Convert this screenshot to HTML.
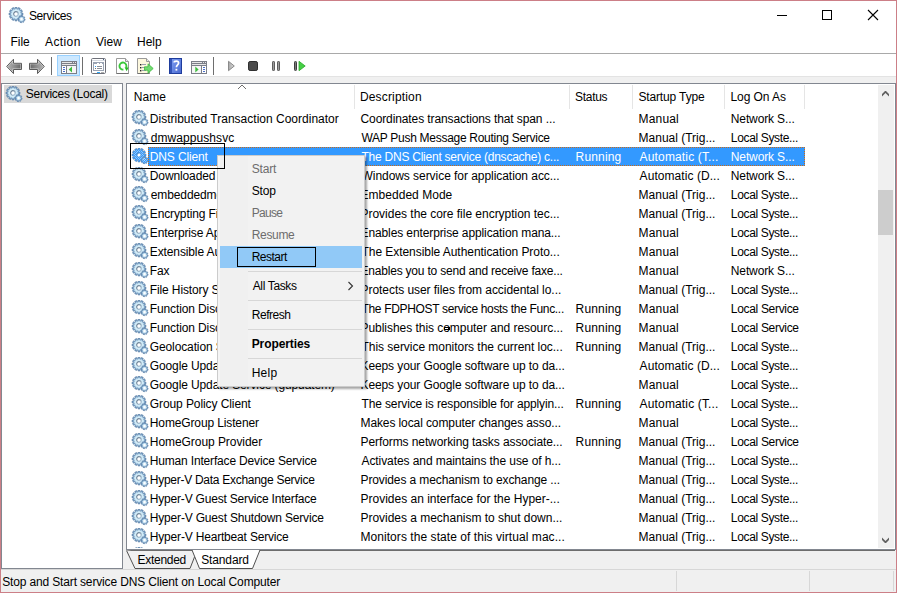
<!DOCTYPE html>
<html><head><meta charset="utf-8">
<style>
*{box-sizing:border-box;margin:0;padding:0}
html,body{width:897px;height:593px;overflow:hidden;background:#fff}
body{position:relative;font-family:"Liberation Sans",sans-serif;font-size:12px;color:#000}
.a{position:absolute}
.t{position:absolute;white-space:nowrap;line-height:14px}
#frame{position:absolute;left:0;top:0;width:897px;height:593px;border:1px solid #cc7f87;z-index:50;pointer-events:none}
/* menu bar */
#menuline{left:1px;top:53px;width:895px;height:1px;background:#a9a9a9}
#tb{left:1px;top:54px;width:895px;height:22px;background:#fff}
#tbline{left:1px;top:76px;width:895px;height:1px;background:#e3e3e3}
#band{left:1px;top:77px;width:895px;height:516px;background:#f0f0f0}
.sep{position:absolute;top:57px;width:1px;height:18px;background:#6e6e6e}
/* left pane */
#lp{left:1px;top:83px;width:122px;height:486px;border:1px solid #828790;background:#fff}
#lpsel{left:4px;top:85px;width:108px;height:18px;background:#d9d9d9}
/* right pane */
#rp{left:126px;top:83px;width:770px;height:467px;border:1px solid #828790;background:#fff;overflow:hidden}
.hs{position:absolute;top:85px;width:1px;height:24px;background:#e5e5e5}
.row{position:static}
.rt{position:absolute;line-height:14px;white-space:nowrap}
.gi{position:absolute}
.row.sel .rt{color:#fff}
#selbar{left:148px;top:147px;width:657px;height:19px;background:#3399ff;border:1px dotted #c96a18}
#focus{left:130px;top:143px;width:95px;height:26px;border:1px solid #000;z-index:30}
/* scrollbar */
#sb{left:878px;top:85px;width:16px;height:463px;background:#f0f0f0}
#thumb{left:878px;top:190px;width:15px;height:45px;background:#cdcdcd}
/* tabs */
#tabline1{left:127px;top:549px;width:768px;height:1px;background:#828790}
#tabline2{left:127px;top:550px;width:768px;height:1px;background:#6d6d6d}
/* status */
#stline{left:1px;top:569px;width:895px;height:1px;background:#d7d7d7}
.sdiv{position:absolute;top:571px;width:1px;height:20px;background:#d7d7d7}
/* context menu */
#cm{left:217px;top:155px;width:148px;height:232px;background:#f0f0f0;border:1px solid #cccccc;z-index:20;box-shadow:2px 2px 2px rgba(0,0,0,0.35)}
#cmgut{left:248px;top:156px;width:116px;height:230px;background:#f2f2f2;z-index:21}
.mi{position:absolute;left:252px;line-height:14px;white-space:nowrap;z-index:22}
.dis{color:#6d6d6d}
.msep{position:absolute;left:248px;width:114px;height:1px;background:#d7d7d7;z-index:22}
#mhi{left:220px;top:246px;width:142px;height:22px;background:#91c9f7;z-index:21}
#mfocus{left:237px;top:247px;width:79px;height:20px;border:1px solid #000;z-index:23}
</style></head>
<body>
<svg width="0" height="0" style="position:absolute">
<defs>
<radialGradient id="gg" gradientUnits="userSpaceOnUse" cx="8" cy="7" r="7.2">
<stop offset="0" stop-color="#ffffff"/><stop offset="0.4" stop-color="#def2fa"/><stop offset="0.62" stop-color="#c6e4f4"/><stop offset="0.82" stop-color="#8ab2d4"/><stop offset="1" stop-color="#5a85ae"/>
</radialGradient>
<linearGradient id="gr" gradientUnits="userSpaceOnUse" x1="5.5" y1="4.5" x2="10.5" y2="9.5"><stop offset="0" stop-color="#5a6d82"/><stop offset="1" stop-color="#b4d3e8"/></linearGradient>
<radialGradient id="gs" gradientUnits="userSpaceOnUse" cx="13.6" cy="12.2" r="3.6">
<stop offset="0" stop-color="#ffffff"/><stop offset="0.5" stop-color="#c4e2f4"/><stop offset="1" stop-color="#6795c0"/>
</radialGradient>
<filter id="self" x="0" y="0" width="1" height="1"><feFlood flood-color="#3399ff" flood-opacity="0.6"/><feComposite in2="SourceAlpha" operator="in"/><feComposite in2="SourceGraphic" operator="over"/></filter>
<g id="gear">
<path d="M13.22 6.08 L14.83 6.01 L14.83 7.99 L13.22 7.92 L12.98 8.81 L14.41 9.56 L13.42 11.27 L12.06 10.41 L11.41 11.06 L12.27 12.42 L10.56 13.41 L9.81 11.98 L8.92 12.22 L8.99 13.83 L7.01 13.83 L7.08 12.22 L6.19 11.98 L5.44 13.41 L3.73 12.42 L4.59 11.06 L3.94 10.41 L2.58 11.27 L1.59 9.56 L3.02 8.81 L2.78 7.92 L1.17 7.99 L1.17 6.01 L2.78 6.08 L3.02 5.19 L1.59 4.44 L2.58 2.73 L3.94 3.59 L4.59 2.94 L3.73 1.58 L5.44 0.59 L6.19 2.02 L7.08 1.78 L7.01 0.17 L8.99 0.17 L8.92 1.78 L9.81 2.02 L10.56 0.59 L12.27 1.58 L11.41 2.94 L12.06 3.59 L13.42 2.73 L14.41 4.44 L12.98 5.19Z" fill="url(#gg)" stroke="#5a80a8" stroke-width="0.8" stroke-linejoin="miter"/>
<circle cx="8" cy="7" r="2.3" fill="#fff" stroke="url(#gr)" stroke-width="1.2"/>
<path d="M16.00 11.99 L17.10 12.11 L16.82 13.49 L15.76 13.17 L15.34 13.79 L16.04 14.65 L14.87 15.43 L14.34 14.46 L13.61 14.60 L13.49 15.70 L12.11 15.42 L12.43 14.36 L11.81 13.94 L10.95 14.64 L10.17 13.47 L11.14 12.94 L11.00 12.21 L9.90 12.09 L10.18 10.71 L11.24 11.03 L11.66 10.41 L10.96 9.55 L12.13 8.77 L12.66 9.74 L13.39 9.60 L13.51 8.50 L14.89 8.78 L14.57 9.84 L15.19 10.26 L16.05 9.56 L16.83 10.73 L15.86 11.26Z" fill="url(#gs)" stroke="#5a80a8" stroke-width="0.7" stroke-linejoin="miter"/>
<circle cx="13.5" cy="12.1" r="1.0" fill="#fff"/>
</g>
<pattern id="dith" patternUnits="userSpaceOnUse" width="2" height="2"><rect x="0" y="0" width="1" height="1" fill="#3399ff"/><rect x="1" y="1" width="1" height="1" fill="#3399ff"/></pattern>
<g id="gearsel"><use href="#gear"/><path d="M13.22 6.08 L14.83 6.01 L14.83 7.99 L13.22 7.92 L12.98 8.81 L14.41 9.56 L13.42 11.27 L12.06 10.41 L11.41 11.06 L12.27 12.42 L10.56 13.41 L9.81 11.98 L8.92 12.22 L8.99 13.83 L7.01 13.83 L7.08 12.22 L6.19 11.98 L5.44 13.41 L3.73 12.42 L4.59 11.06 L3.94 10.41 L2.58 11.27 L1.59 9.56 L3.02 8.81 L2.78 7.92 L1.17 7.99 L1.17 6.01 L2.78 6.08 L3.02 5.19 L1.59 4.44 L2.58 2.73 L3.94 3.59 L4.59 2.94 L3.73 1.58 L5.44 0.59 L6.19 2.02 L7.08 1.78 L7.01 0.17 L8.99 0.17 L8.92 1.78 L9.81 2.02 L10.56 0.59 L12.27 1.58 L11.41 2.94 L12.06 3.59 L13.42 2.73 L14.41 4.44 L12.98 5.19Z M8 5.3A1.7 1.7 0 1 0 8 8.7A1.7 1.7 0 1 0 8 5.3Z M16.00 11.99 L17.10 12.11 L16.82 13.49 L15.76 13.17 L15.34 13.79 L16.04 14.65 L14.87 15.43 L14.34 14.46 L13.61 14.60 L13.49 15.70 L12.11 15.42 L12.43 14.36 L11.81 13.94 L10.95 14.64 L10.17 13.47 L11.14 12.94 L11.00 12.21 L9.90 12.09 L10.18 10.71 L11.24 11.03 L11.66 10.41 L10.96 9.55 L12.13 8.77 L12.66 9.74 L13.39 9.60 L13.51 8.50 L14.89 8.78 L14.57 9.84 L15.19 10.26 L16.05 9.56 L16.83 10.73 L15.86 11.26Z" fill="url(#dith)" fill-rule="evenodd"/><path d="M13.22 6.08 L14.83 6.01 L14.83 7.99 L13.22 7.92 L12.98 8.81 L14.41 9.56 L13.42 11.27 L12.06 10.41 L11.41 11.06 L12.27 12.42 L10.56 13.41 L9.81 11.98 L8.92 12.22 L8.99 13.83 L7.01 13.83 L7.08 12.22 L6.19 11.98 L5.44 13.41 L3.73 12.42 L4.59 11.06 L3.94 10.41 L2.58 11.27 L1.59 9.56 L3.02 8.81 L2.78 7.92 L1.17 7.99 L1.17 6.01 L2.78 6.08 L3.02 5.19 L1.59 4.44 L2.58 2.73 L3.94 3.59 L4.59 2.94 L3.73 1.58 L5.44 0.59 L6.19 2.02 L7.08 1.78 L7.01 0.17 L8.99 0.17 L8.92 1.78 L9.81 2.02 L10.56 0.59 L12.27 1.58 L11.41 2.94 L12.06 3.59 L13.42 2.73 L14.41 4.44 L12.98 5.19Z M8 5.3A1.7 1.7 0 1 0 8 8.7A1.7 1.7 0 1 0 8 5.3Z M16.00 11.99 L17.10 12.11 L16.82 13.49 L15.76 13.17 L15.34 13.79 L16.04 14.65 L14.87 15.43 L14.34 14.46 L13.61 14.60 L13.49 15.70 L12.11 15.42 L12.43 14.36 L11.81 13.94 L10.95 14.64 L10.17 13.47 L11.14 12.94 L11.00 12.21 L9.90 12.09 L10.18 10.71 L11.24 11.03 L11.66 10.41 L10.96 9.55 L12.13 8.77 L12.66 9.74 L13.39 9.60 L13.51 8.50 L14.89 8.78 L14.57 9.84 L15.19 10.26 L16.05 9.56 L16.83 10.73 L15.86 11.26Z" fill="#3399ff" fill-opacity="0.35" fill-rule="evenodd"/></g>
</defs>
</svg>

<div id="frame"></div>

<!-- title bar -->
<svg class="a" style="left:8px;top:7px" width="18" height="18" viewBox="0 0 18 18"><use href="#gear"/></svg>
<div class="t" style="left:29.00px;top:9px;letter-spacing:-0.429px">Services</div>
<div class="a" style="left:777px;top:15px;width:10px;height:1px;background:#000"></div>
<div class="a" style="left:822px;top:10px;width:10px;height:10px;border:1px solid #000"></div>
<svg class="a" style="left:867px;top:9px" width="12" height="12" viewBox="0 0 12 12"><path d="M1 1L11 11M11 1L1 11" stroke="#000" stroke-width="1.1"/></svg>

<!-- menu -->
<div class="t" style="left:10.60px;top:35px;letter-spacing:-0.100px">File</div>
<div class="t" style="left:45.00px;top:35px;letter-spacing:0.400px">Action</div>
<div class="t" style="left:96px;top:35px">View</div>
<div class="t" style="left:137px;top:35px">Help</div>
<div class="a" id="menuline"></div>
<div class="a" id="tb"></div>
<div class="a" id="tbline"></div>
<div class="a" id="band"></div>

<!-- toolbar icons -->
<svg class="a" style="left:5px;top:58px" width="18" height="17" viewBox="0 0 18 17"><defs><linearGradient id="ag" x1="0" y1="0" x2="1" y2="0"><stop offset="0" stop-color="#b4b4b4"/><stop offset="1" stop-color="#6c6c6c"/></linearGradient><linearGradient id="ag2" x1="1" y1="0" x2="0" y2="0"><stop offset="0" stop-color="#b4b4b4"/><stop offset="1" stop-color="#6c6c6c"/></linearGradient></defs><path d="M1.7 8.4L8.5 1.2V5.3H16.5V11.5H8.5V15.6z" fill="#d6d6d6" stroke="#5c5c5c" stroke-width="1" stroke-linejoin="miter"/><path d="M2.5 8.4L7.5 3.4V6.3H15.5V10.5H7.5V13.4z" fill="url(#ag)"/></svg>
<svg class="a" style="left:28px;top:58px" width="18" height="17" viewBox="0 0 18 17"><path d="M16.3 8.4L9.5 1.2V5.3H1.5V11.5H9.5V15.6z" fill="#d6d6d6" stroke="#5c5c5c" stroke-width="1" stroke-linejoin="miter"/><path d="M15.5 8.4L10.5 3.4V6.3H2.5V10.5H10.5V13.4z" fill="url(#ag2)"/></svg>
<div class="sep" style="left:51px"></div>
<div class="a" style="left:57px;top:55px;width:23px;height:21px;background:#cce8ff;border:1px solid #99d1ff"></div>
<svg class="a" style="left:61px;top:61px" width="16" height="13" viewBox="0 0 16 13" shape-rendering="crispEdges"><rect x="0" y="0" width="16" height="13" fill="#7b7e87"/><rect x="1" y="1" width="10" height="1" fill="#e6e6e6"/><rect x="12" y="1" width="1" height="1" fill="#e6e6e6"/><rect x="14" y="1" width="1" height="1" fill="#e6e6e6"/><rect x="1" y="3" width="14" height="1" fill="#e6e6e6"/><rect x="1" y="5" width="4" height="7" fill="#fff"/><rect x="6" y="5" width="9" height="7" fill="#f6f6f6"/><rect x="2" y="6" width="2" height="1" fill="#4a6fc9"/><rect x="2" y="8" width="2" height="1" fill="#4a6fc9"/><rect x="2" y="10" width="2" height="1" fill="#4a6fc9"/><path d="M7.7 8.5L11 5.6V11.4z" fill="#3cbd3c" shape-rendering="auto"/></svg>
<div class="sep" style="left:82px"></div>
<svg class="a" style="left:91px;top:58px" width="15" height="16" viewBox="0 0 15 16"><rect x="0.5" y="0.5" width="14" height="15" rx="1.2" fill="#fff" stroke="#6e7079"/><rect x="1" y="2" width="13" height="1" fill="#d6dae2"/><rect x="12" y="1" width="1" height="1" fill="#4a5f80"/><rect x="2.5" y="4.5" width="10" height="8" fill="#fff" stroke="#9aa3b3"/><rect x="3" y="5" width="9" height="1" fill="#9aa3b3"/><rect x="6" y="5" width="2" height="1" fill="#fff"/><rect x="9" y="5" width="2" height="1" fill="#fff"/><rect x="4" y="8" width="1" height="1" fill="#2a9af0"/><rect x="6" y="8" width="5" height="1" fill="#8a8f99"/><rect x="4" y="10" width="1" height="1" fill="#777"/><rect x="6" y="10" width="5" height="1" fill="#8a8f99"/><rect x="6" y="14" width="3" height="1" fill="#30a8f8"/><rect x="10" y="14" width="3" height="1" fill="#b0b0b0"/></svg>
<svg class="a" style="left:116px;top:58px" width="13" height="16" viewBox="0 0 13 16"><path d="M0.5 0.5h9l3 3v12h-12z" fill="#fff" stroke="#9a9a9a"/><path d="M0.5 15.5h12" stroke="#707070"/><path d="M9.5 0.5v3h3" fill="#e8e8e8" stroke="#9a9a9a"/><path d="M7.4 11.55A3.5 3.5 0 1 1 10.1 9.6" fill="none" stroke="#3cc83c" stroke-width="1.9"/><path d="M8.6 9.2L12.6 9.6L10.6 13.2z" fill="#22b822"/></svg>
<svg class="a" style="left:137px;top:58px" width="17" height="16" viewBox="0 0 17 16"><path d="M0.5 0.5h9l3 3v12h-12z" fill="#fdf8de" stroke="#9a9a9a"/><path d="M0.5 15.5h12" stroke="#707070"/><path d="M9.5 0.5v3h3" fill="#e8e8e8" stroke="#9a9a9a"/><rect x="3" y="6" width="1.4" height="1.4" fill="#222"/><rect x="5" y="6" width="4" height="1" fill="#9aa0ae"/><rect x="3" y="9" width="1.4" height="1.4" fill="#222"/><rect x="5" y="9" width="4" height="1" fill="#9aa0ae"/><rect x="3" y="12" width="1.4" height="1.4" fill="#222"/><rect x="5" y="12" width="4" height="1" fill="#9aa0ae"/><path d="M7.5 8.8H11V5.8L16.2 10.5 11 15.2V12.2H7.5z" fill="#72da72" stroke="#3cba3c" stroke-width="0.8" stroke-linejoin="round"/></svg>
<div class="sep" style="left:159px"></div>
<svg class="a" style="left:169px;top:58px" width="13" height="16" viewBox="0 0 13 16"><defs><linearGradient id="hg" x1="0" y1="0" x2="1" y2="1"><stop offset="0" stop-color="#7b9bf0"/><stop offset="1" stop-color="#4a6ad0"/></linearGradient></defs><rect x="0" y="0" width="13" height="16" fill="#1e3c9c"/><rect x="1" y="1" width="2" height="14" fill="#3454b8"/><rect x="3" y="1" width="9" height="14" fill="url(#hg)"/><path d="M5.2 4.6C5.2 2.6 9.6 2.3 9.6 4.9C9.6 6.8 7.4 6.9 7.4 9.2" fill="none" stroke="#fff" stroke-width="1.7"/><rect x="6.5" y="10.8" width="1.8" height="1.8" fill="#fff"/></svg>
<svg class="a" style="left:191px;top:61px" width="16" height="13" viewBox="0 0 16 13" shape-rendering="crispEdges"><rect x="0" y="0" width="16" height="13" fill="#7b7e87"/><rect x="1" y="1" width="10" height="1" fill="#e6e6e6"/><rect x="12" y="1" width="1" height="1" fill="#e6e6e6"/><rect x="14" y="1" width="1" height="1" fill="#e6e6e6"/><rect x="1" y="3" width="14" height="1" fill="#e6e6e6"/><rect x="1" y="5" width="9" height="7" fill="#f6f6f6"/><rect x="11" y="5" width="4" height="7" fill="#fff"/><rect x="12" y="6" width="2" height="1" fill="#4a6fc9"/><rect x="12" y="8" width="2" height="1" fill="#4a6fc9"/><rect x="12" y="10" width="2" height="1" fill="#4a6fc9"/><path d="M4.3 5.6L7.6 8.5L4.3 11.4z" fill="#3cbd3c" shape-rendering="auto"/></svg>
<div class="sep" style="left:213px"></div>
<svg class="a" style="left:227px;top:60px" width="9" height="12" viewBox="0 0 9 12"><defs><linearGradient id="pg" x1="0" y1="0" x2="1" y2="0"><stop offset="0" stop-color="#a8a8a8"/><stop offset="1" stop-color="#dcdcdc"/></linearGradient></defs><path d="M1.5 1.3V10.7L7.3 6z" fill="url(#pg)" stroke="#8a8a8a" stroke-width="1" stroke-linejoin="round"/></svg>
<svg class="a" style="left:248px;top:61px" width="10" height="10" viewBox="0 0 10 10"><rect x="0.5" y="0.5" width="9" height="9" rx="1.6" fill="#4c4c4c" stroke="#2e2e2e"/></svg>
<svg class="a" style="left:272px;top:61px" width="9" height="10" viewBox="0 0 9 10"><rect x="0.5" y="0.5" width="2" height="9" rx="0.6" fill="#9c9c9c" stroke="#5e5e5e"/><rect x="5.5" y="0.5" width="2" height="9" rx="0.6" fill="#9c9c9c" stroke="#5e5e5e"/></svg>
<svg class="a" style="left:294px;top:61px" width="12" height="10" viewBox="0 0 12 10"><rect x="0.5" y="0.5" width="2" height="9" rx="0.8" fill="#7a7a7a" stroke="#3e3e3e"/><path d="M5 0.3V9.7L11.2 5z" fill="#46d046" stroke="#2aa82a" stroke-width="0.8" stroke-linejoin="round"/></svg>

<!-- left pane -->
<div class="a" id="lp"></div>
<div class="a" id="lpsel"></div>
<svg class="a" style="left:5px;top:86px" width="18" height="18" viewBox="0 0 18 18"><use href="#gear"/></svg>
<div class="t" style="left:25.80px;top:87px;letter-spacing:-0.253px">Services (Local)</div>

<!-- right pane -->
<div class="a" id="rp"></div>
<div class="t" style="left:133.80px;top:90px;letter-spacing:0.033px">Name</div>
<div class="t" style="left:359.90px;top:90px;letter-spacing:0.170px">Description</div>
<div class="t" style="left:575.10px;top:90px;letter-spacing:-0.300px">Status</div>
<div class="t" style="left:638.40px;top:90px;letter-spacing:-0.136px">Startup Type</div>
<div class="t" style="left:730.40px;top:90px;letter-spacing:-0.050px">Log On As</div>
<div class="hs" style="left:354px"></div>
<div class="hs" style="left:569px"></div>
<div class="hs" style="left:632px"></div>
<div class="hs" style="left:724px"></div>
<div class="hs" style="left:804px"></div>
<svg class="a" style="left:237px;top:84px" width="10" height="6" viewBox="0 0 10 6"><path d="M1 5L5 1L9 5" fill="none" stroke="#6e6e6e" stroke-width="1"/></svg>

<div class="a" id="selbar"></div>
<div class="a" style="left:127px;top:109px;width:751px;height:439px;overflow:hidden;z-index:2">
<div style="position:absolute;left:-127px;top:-109px;width:897px;height:593px">
<div class="row"><svg class="gi" style="left:131px;top:110px" width="18" height="18" viewBox="0 0 18 18"><use href="#gear"/></svg><div class="rt" style="left:149.80px;top:112px;letter-spacing:0.006px">Distributed Transaction Coordinator</div><div class="rt" style="left:360.50px;top:112px;letter-spacing:-0.103px">Coordinates transactions that span ...</div><div class="rt" style="left:638.60px;top:112px;letter-spacing:0.160px">Manual</div><div class="rt" style="left:730.80px;top:112px;letter-spacing:-0.127px">Network S...</div></div>
<div class="row"><svg class="gi" style="left:131px;top:129px" width="18" height="18" viewBox="0 0 18 18"><use href="#gear"/></svg><div class="rt" style="left:150.80px;top:131px;letter-spacing:0.064px">dmwappushsvc</div><div class="rt" style="left:361.50px;top:131px;letter-spacing:-0.287px">WAP Push Message Routing Service</div><div class="rt" style="left:638.60px;top:131px;letter-spacing:-0.007px">Manual (Trig...</div><div class="rt" style="left:730.80px;top:131px;letter-spacing:-0.338px">Local Syste...</div></div>
<div class="row sel"><svg class="gi" style="left:131px;top:148px" width="18" height="18" viewBox="0 0 18 18"><use href="#gearsel"/></svg><div class="rt" style="left:149.80px;top:150px;letter-spacing:-0.144px">DNS Client</div><div class="rt" style="left:361.50px;top:150px;letter-spacing:-0.241px">The DNS Client service (dnscache) c...</div><div class="rt" style="left:575.60px;top:150px;letter-spacing:0.150px">Running</div><div class="rt" style="left:639.60px;top:150px;letter-spacing:0.150px">Automatic (T...</div><div class="rt" style="left:730.80px;top:150px;letter-spacing:-0.127px">Network S...</div></div>
<div class="row"><svg class="gi" style="left:131px;top:167px" width="18" height="18" viewBox="0 0 18 18"><use href="#gear"/></svg><div class="rt" style="left:149.80px;top:169px;letter-spacing:-0.120px">Downloaded Maps Manager</div><div class="rt" style="left:361.50px;top:169px;letter-spacing:-0.051px">Windows service for application acc...</div><div class="rt" style="left:639.60px;top:169px;letter-spacing:0.064px">Automatic (D...</div><div class="rt" style="left:730.80px;top:169px;letter-spacing:-0.127px">Network S...</div></div>
<div class="row"><svg class="gi" style="left:131px;top:186px" width="18" height="18" viewBox="0 0 18 18"><use href="#gear"/></svg><div class="rt" style="left:150.80px;top:188px;letter-spacing:-0.120px">embeddedmode</div><div class="rt" style="left:360.50px;top:188px;letter-spacing:0.033px">Embedded Mode</div><div class="rt" style="left:638.60px;top:188px;letter-spacing:-0.007px">Manual (Trig...</div><div class="rt" style="left:730.80px;top:188px;letter-spacing:-0.338px">Local Syste...</div></div>
<div class="row"><svg class="gi" style="left:131px;top:205px" width="18" height="18" viewBox="0 0 18 18"><use href="#gear"/></svg><div class="rt" style="left:149.80px;top:207px;letter-spacing:-0.120px">Encrypting File System (EFS)</div><div class="rt" style="left:360.50px;top:207px;letter-spacing:-0.023px">Provides the core file encryption tec...</div><div class="rt" style="left:638.60px;top:207px;letter-spacing:-0.007px">Manual (Trig...</div><div class="rt" style="left:730.80px;top:207px;letter-spacing:-0.338px">Local Syste...</div></div>
<div class="row"><svg class="gi" style="left:131px;top:224px" width="18" height="18" viewBox="0 0 18 18"><use href="#gear"/></svg><div class="rt" style="left:149.80px;top:226px;letter-spacing:-0.120px">Enterprise App Management Service</div><div class="rt" style="left:360.50px;top:226px;letter-spacing:-0.108px">Enables enterprise application mana...</div><div class="rt" style="left:638.60px;top:226px;letter-spacing:0.160px">Manual</div><div class="rt" style="left:730.80px;top:226px;letter-spacing:-0.338px">Local Syste...</div></div>
<div class="row"><svg class="gi" style="left:131px;top:243px" width="18" height="18" viewBox="0 0 18 18"><use href="#gear"/></svg><div class="rt" style="left:149.80px;top:245px;letter-spacing:-0.120px">Extensible Authentication Protocol</div><div class="rt" style="left:361.50px;top:245px;letter-spacing:-0.051px">The Extensible Authentication Proto...</div><div class="rt" style="left:638.60px;top:245px;letter-spacing:0.160px">Manual</div><div class="rt" style="left:730.80px;top:245px;letter-spacing:-0.338px">Local Syste...</div></div>
<div class="row"><svg class="gi" style="left:131px;top:262px" width="18" height="18" viewBox="0 0 18 18"><use href="#gear"/></svg><div class="rt" style="left:149.80px;top:264px;letter-spacing:-0.120px">Fax</div><div class="rt" style="left:360.50px;top:264px;letter-spacing:-0.203px">Enables you to send and receive faxe...</div><div class="rt" style="left:638.60px;top:264px;letter-spacing:0.160px">Manual</div><div class="rt" style="left:730.80px;top:264px;letter-spacing:-0.127px">Network S...</div></div>
<div class="row"><svg class="gi" style="left:131px;top:281px" width="18" height="18" viewBox="0 0 18 18"><use href="#gear"/></svg><div class="rt" style="left:149.80px;top:283px;letter-spacing:-0.120px">File History Service</div><div class="rt" style="left:360.50px;top:283px;letter-spacing:-0.050px">Protects user files from accidental lo...</div><div class="rt" style="left:638.60px;top:283px;letter-spacing:-0.007px">Manual (Trig...</div><div class="rt" style="left:730.80px;top:283px;letter-spacing:-0.338px">Local Syste...</div></div>
<div class="row"><svg class="gi" style="left:131px;top:300px" width="18" height="18" viewBox="0 0 18 18"><use href="#gear"/></svg><div class="rt" style="left:149.80px;top:302px;letter-spacing:-0.120px">Function Discovery Provider Host</div><div class="rt" style="left:361.50px;top:302px;letter-spacing:-0.328px">The FDPHOST service hosts the Func...</div><div class="rt" style="left:575.60px;top:302px;letter-spacing:0.150px">Running</div><div class="rt" style="left:638.60px;top:302px;letter-spacing:0.160px">Manual</div><div class="rt" style="left:730.80px;top:302px;letter-spacing:-0.317px">Local Service</div></div>
<div class="row"><svg class="gi" style="left:131px;top:319px" width="18" height="18" viewBox="0 0 18 18"><use href="#gear"/></svg><div class="rt" style="left:149.80px;top:321px;letter-spacing:-0.120px">Function Discovery Resource Publication</div><div class="rt" style="left:360.50px;top:321px;letter-spacing:-0.041px">Publishes this computer and resourc...</div><div class="rt" style="left:575.60px;top:321px;letter-spacing:0.150px">Running</div><div class="rt" style="left:638.60px;top:321px;letter-spacing:0.160px">Manual</div><div class="rt" style="left:730.80px;top:321px;letter-spacing:-0.317px">Local Service</div></div>
<div class="row"><svg class="gi" style="left:131px;top:338px" width="18" height="18" viewBox="0 0 18 18"><use href="#gear"/></svg><div class="rt" style="left:149.80px;top:340px;letter-spacing:-0.120px">Geolocation Service</div><div class="rt" style="left:361.50px;top:340px;letter-spacing:-0.038px">This service monitors the current loc...</div><div class="rt" style="left:575.60px;top:340px;letter-spacing:0.150px">Running</div><div class="rt" style="left:638.60px;top:340px;letter-spacing:-0.007px">Manual (Trig...</div><div class="rt" style="left:730.80px;top:340px;letter-spacing:-0.338px">Local Syste...</div></div>
<div class="row"><svg class="gi" style="left:131px;top:357px" width="18" height="18" viewBox="0 0 18 18"><use href="#gear"/></svg><div class="rt" style="left:149.80px;top:359px;letter-spacing:-0.120px">Google Update Service (gupdate)</div><div class="rt" style="left:360.50px;top:359px;letter-spacing:-0.103px">Keeps your Google software up to da...</div><div class="rt" style="left:639.60px;top:359px;letter-spacing:0.064px">Automatic (D...</div><div class="rt" style="left:730.80px;top:359px;letter-spacing:-0.338px">Local Syste...</div></div>
<div class="row"><svg class="gi" style="left:131px;top:376px" width="18" height="18" viewBox="0 0 18 18"><use href="#gear"/></svg><div class="rt" style="left:149.80px;top:378px;letter-spacing:-0.120px">Google Update Service (gupdatem)</div><div class="rt" style="left:360.50px;top:378px;letter-spacing:-0.103px">Keeps your Google software up to da...</div><div class="rt" style="left:638.60px;top:378px;letter-spacing:0.160px">Manual</div><div class="rt" style="left:730.80px;top:378px;letter-spacing:-0.338px">Local Syste...</div></div>
<div class="row"><svg class="gi" style="left:131px;top:395px" width="18" height="18" viewBox="0 0 18 18"><use href="#gear"/></svg><div class="rt" style="left:149.80px;top:397px;letter-spacing:-0.089px">Group Policy Client</div><div class="rt" style="left:361.50px;top:397px;letter-spacing:-0.128px">The service is responsible for applyin...</div><div class="rt" style="left:575.60px;top:397px;letter-spacing:0.150px">Running</div><div class="rt" style="left:639.60px;top:397px;letter-spacing:0.150px">Automatic (T...</div><div class="rt" style="left:730.80px;top:397px;letter-spacing:-0.338px">Local Syste...</div></div>
<div class="row"><svg class="gi" style="left:131px;top:414px" width="18" height="18" viewBox="0 0 18 18"><use href="#gear"/></svg><div class="rt" style="left:149.80px;top:416px;letter-spacing:-0.129px">HomeGroup Listener</div><div class="rt" style="left:360.50px;top:416px;letter-spacing:-0.103px">Makes local computer changes asso...</div><div class="rt" style="left:638.60px;top:416px;letter-spacing:0.160px">Manual</div><div class="rt" style="left:730.80px;top:416px;letter-spacing:-0.338px">Local Syste...</div></div>
<div class="row"><svg class="gi" style="left:131px;top:433px" width="18" height="18" viewBox="0 0 18 18"><use href="#gear"/></svg><div class="rt" style="left:149.80px;top:435px;letter-spacing:-0.059px">HomeGroup Provider</div><div class="rt" style="left:360.50px;top:435px;letter-spacing:-0.089px">Performs networking tasks associate...</div><div class="rt" style="left:575.60px;top:435px;letter-spacing:0.150px">Running</div><div class="rt" style="left:638.60px;top:435px;letter-spacing:-0.007px">Manual (Trig...</div><div class="rt" style="left:730.80px;top:435px;letter-spacing:-0.317px">Local Service</div></div>
<div class="row"><svg class="gi" style="left:131px;top:452px" width="18" height="18" viewBox="0 0 18 18"><use href="#gear"/></svg><div class="rt" style="left:149.80px;top:454px;letter-spacing:-0.172px">Human Interface Device Service</div><div class="rt" style="left:361.50px;top:454px;letter-spacing:-0.082px">Activates and maintains the use of h...</div><div class="rt" style="left:638.60px;top:454px;letter-spacing:-0.007px">Manual (Trig...</div><div class="rt" style="left:730.80px;top:454px;letter-spacing:-0.338px">Local Syste...</div></div>
<div class="row"><svg class="gi" style="left:131px;top:471px" width="18" height="18" viewBox="0 0 18 18"><use href="#gear"/></svg><div class="rt" style="left:149.80px;top:473px;letter-spacing:-0.275px">Hyper-V Data Exchange Service</div><div class="rt" style="left:360.50px;top:473px;letter-spacing:-0.109px">Provides a mechanism to exchange ...</div><div class="rt" style="left:638.60px;top:473px;letter-spacing:-0.007px">Manual (Trig...</div><div class="rt" style="left:730.80px;top:473px;letter-spacing:-0.338px">Local Syste...</div></div>
<div class="row"><svg class="gi" style="left:131px;top:490px" width="18" height="18" viewBox="0 0 18 18"><use href="#gear"/></svg><div class="rt" style="left:149.80px;top:492px;letter-spacing:-0.193px">Hyper-V Guest Service Interface</div><div class="rt" style="left:360.50px;top:492px;letter-spacing:-0.005px">Provides an interface for the Hyper-...</div><div class="rt" style="left:638.60px;top:492px;letter-spacing:-0.007px">Manual (Trig...</div><div class="rt" style="left:730.80px;top:492px;letter-spacing:-0.338px">Local Syste...</div></div>
<div class="row"><svg class="gi" style="left:131px;top:509px" width="18" height="18" viewBox="0 0 18 18"><use href="#gear"/></svg><div class="rt" style="left:149.80px;top:511px;letter-spacing:-0.183px">Hyper-V Guest Shutdown Service</div><div class="rt" style="left:360.50px;top:511px;letter-spacing:-0.026px">Provides a mechanism to shut down...</div><div class="rt" style="left:638.60px;top:511px;letter-spacing:-0.007px">Manual (Trig...</div><div class="rt" style="left:730.80px;top:511px;letter-spacing:-0.338px">Local Syste...</div></div>
<div class="row"><svg class="gi" style="left:131px;top:528px" width="18" height="18" viewBox="0 0 18 18"><use href="#gear"/></svg><div class="rt" style="left:149.80px;top:530px;letter-spacing:-0.183px">Hyper-V Heartbeat Service</div><div class="rt" style="left:360.50px;top:530px;letter-spacing:0.055px">Monitors the state of this virtual mac...</div><div class="rt" style="left:638.60px;top:530px;letter-spacing:-0.007px">Manual (Trig...</div><div class="rt" style="left:730.80px;top:530px;letter-spacing:-0.338px">Local Syste...</div></div>
<div class="row"><svg class="gi" style="left:131px;top:547px" width="18" height="18" viewBox="0 0 18 18"><use href="#gear"/></svg><div class="rt" style="left:149.80px;top:549px;letter-spacing:-0.120px">Hyper-V Remote Desktop Virtualization Service</div><div class="rt" style="left:360.50px;top:549px;letter-spacing:-0.295px">Provides a platform for communication...</div><div class="rt" style="left:638.60px;top:549px;letter-spacing:-0.007px">Manual (Trig...</div><div class="rt" style="left:730.80px;top:549px;letter-spacing:-0.338px">Local Syste...</div></div>
</div>
</div>
<div class="a" id="focus"></div>

<svg class="a" style="left:444px;top:327px;z-index:6" width="6" height="3" viewBox="0 0 6 3" shape-rendering="crispEdges"><rect x="0" y="0" width="6" height="3" fill="#000"/><rect x="1" y="1" width="3" height="1" fill="#fff"/></svg>
<!-- scrollbar -->
<div class="a" id="sb"></div>
<div class="a" id="thumb"></div>
<svg class="a" style="left:882px;top:91px" width="7" height="6" viewBox="0 0 7 6"><path d="M3 0H4L7 3V5.6L3.5 2.1L0 5.6V3z" fill="#606060"/></svg>
<svg class="a" style="left:882px;top:537px" width="7" height="6" viewBox="0 0 7 6"><path d="M3 6H4L7 3V0.4L3.5 3.9L0 0.4V3z" fill="#606060"/></svg>

<!-- tabs -->
<div class="a" id="tabline1"></div>
<div class="a" id="tabline2"></div>
<svg class="a" style="left:126px;top:549px;z-index:3" width="140" height="21" viewBox="0 0 140 21">
<path d="M0.5 1.5L9 19.5H64L68.5 8" fill="#f0f0f0" stroke="#505050" stroke-width="1"/>
<path d="M66 1L73.5 19.5H126.5L134 1z" fill="#fff"/>
<path d="M66 1L73.5 19.5H126.5L134 1" fill="none" stroke="#505050" stroke-width="1"/>
</svg>
<div class="t" style="left:137.60px;top:553px;letter-spacing:-0.300px;z-index:4">Extended</div>
<div class="t" style="left:201.20px;top:553px;letter-spacing:-0.129px;z-index:4">Standard</div>

<!-- status bar -->
<div class="a" id="stline"></div>
<div class="t" style="left:2.20px;top:575px;letter-spacing:-0.148px">Stop and Start service DNS Client on Local Computer</div>
<div class="sdiv" style="left:676px"></div>
<div class="sdiv" style="left:809px"></div>
<div class="sdiv" style="left:893px"></div>

<!-- context menu -->
<div class="a" id="cm"></div>
<div class="a" id="cmgut"></div>
<div class="a" style="left:218px;top:156px;width:2px;height:230px;background:#f5f5f5;z-index:21"></div>
<div class="a" id="mhi"></div>
<div class="a" id="mfocus"></div>
<div class="mi dis" style="left:251.70px;top:162px;letter-spacing:-0.175px">Start</div>
<div class="mi" style="left:251.70px;top:184px;letter-spacing:-0.167px">Stop</div>
<div class="mi dis" style="left:251.70px;top:206px;letter-spacing:-0.675px">Pause</div>
<div class="mi dis" style="left:251.70px;top:228px;letter-spacing:-0.320px">Resume</div>
<div class="mi" style="left:251.70px;top:250px;letter-spacing:-0.500px">Restart</div>
<div class="msep" style="top:271px"></div>
<div class="mi" style="left:252.70px;top:279px;letter-spacing:-0.350px">All Tasks</div>
<svg class="a" style="left:347px;top:281px;z-index:22" width="7" height="10" viewBox="0 0 7 10"><path d="M1.5 1L5.5 5L1.5 9" fill="none" stroke="#333" stroke-width="1.1"/></svg>
<div class="msep" style="top:300px"></div>
<div class="mi" style="left:251.70px;top:308px;letter-spacing:-0.450px">Refresh</div>
<div class="msep" style="top:329px"></div>
<div class="mi" style="left:251.70px;top:337px;letter-spacing:-0.089px;font-weight:bold">Properties</div>
<div class="msep" style="top:358px"></div>
<div class="mi" style="left:251.70px;top:366px;letter-spacing:0.267px">Help</div>

</body></html>
